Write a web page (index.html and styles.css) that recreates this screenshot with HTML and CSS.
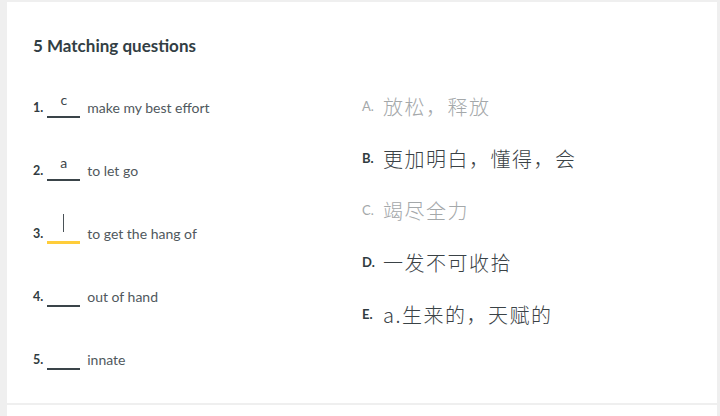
FILE: index.html
```html
<!DOCTYPE html>
<html lang="en">
<head>
<meta charset="utf-8">
<title>5 Matching questions</title>
<link rel="stylesheet" href="styles.css">
</head>
<body>
<div class="card">
  <h2 class="title">5 Matching questions</h2>
  <div class="columns">
    <ol class="questions">
      <li class="q"><span class="num">1.</span><span class="blank"><span class="ans">c</span></span><span class="term">make my best effort</span></li>
      <li class="q"><span class="num">2.</span><span class="blank"><span class="ans">a</span></span><span class="term">to let go</span></li>
      <li class="q"><span class="num">3.</span><span class="blank focus"><span class="caret"></span></span><span class="term">to get the hang of</span></li>
      <li class="q"><span class="num">4.</span><span class="blank"></span><span class="term">out of hand</span></li>
      <li class="q"><span class="num">5.</span><span class="blank"></span><span class="term">innate</span></li>
    </ol>
    <ul class="options">
      <li class="opt used"><span class="letter">A.</span><span class="def">放松，释放</span></li>
      <li class="opt"><span class="letter">B.</span><span class="def">更加明白，懂得，会</span></li>
      <li class="opt used"><span class="letter">C.</span><span class="def">竭尽全力</span></li>
      <li class="opt"><span class="letter">D.</span><span class="def">一发不可收拾</span></li>
      <li class="opt"><span class="letter">E.</span><span class="def">a.生来的，天赋的</span></li>
    </ul>
  </div>
</div>
<div class="card next"></div>
</body>
</html>
```

FILE: styles.css
```css
html, body {
  margin: 0;
  padding: 0;
  overflow: hidden;
}
body {
  background: #efefef;
  font-family: Lato, "Noto Sans", sans-serif;
  color: #303b40;
  padding: 2px 3px 0 7px;
  height: 416px;
  box-sizing: border-box;
}
.card {
  background: #fff;
  height: 401px;
  padding: 0 26px;
  box-sizing: border-box;
}
.card.next {
  margin-top: 2px;
  height: 11px;
}
.title {
  margin: 0;
  padding-top: 34px;
  font-size: 17px;
  line-height: 20px;
  font-weight: 700;
  color: #323e44;
}
.columns {
  display: grid;
  grid-template-columns: 329px 1fr;
  margin-top: 20px;
}
.questions, .options {
  list-style: none;
  margin: 0;
  padding: 0;
}
.q {
  height: 63px;
  display: flex;
  align-items: center;
  font-size: 14px;
  line-height: 20px;
}
.num {
  font-size: 12.5px;
  font-weight: 700;
  color: #303b40;
  margin-right: 4px;
}
.blank {
  position: relative;
  width: 33px;
  height: 20px;
  border-bottom: 2px solid #3a4449;
  margin-right: 7px;
  text-align: center;
  box-sizing: border-box;
}
.ans {
  position: absolute;
  left: 0;
  right: 0;
  top: -8px;
  font-size: 14px;
  line-height: 20px;
  color: #3c4449;
}
.blank.focus {
  border-bottom: 3px solid #ffcd3a;
  height: 31px;
  margin-bottom: 10px;
}
.caret {
  position: absolute;
  left: 16px;
  top: 1px;
  width: 1px;
  height: 18px;
  background: #4a5257;
}
.term {
  color: #50585d;
}
.options {
  padding-top: 4px;
}
.opt {
  height: 52px;
  display: flex;
  align-items: center;
}
.letter {
  font-size: 13px;
  font-weight: 700;
  width: 21px;
  color: #303b40;
}
.def {
  font-family: "Noto Sans CJK SC", sans-serif;
  font-size: 20px;
  font-weight: 300;
  letter-spacing: 1.5px;
  color: #3a4246;
}
.opt.used .letter,
.opt.used .def {
  color: #a4a8aa;
}
.opt.used .letter {
  font-weight: 400;
}
```
